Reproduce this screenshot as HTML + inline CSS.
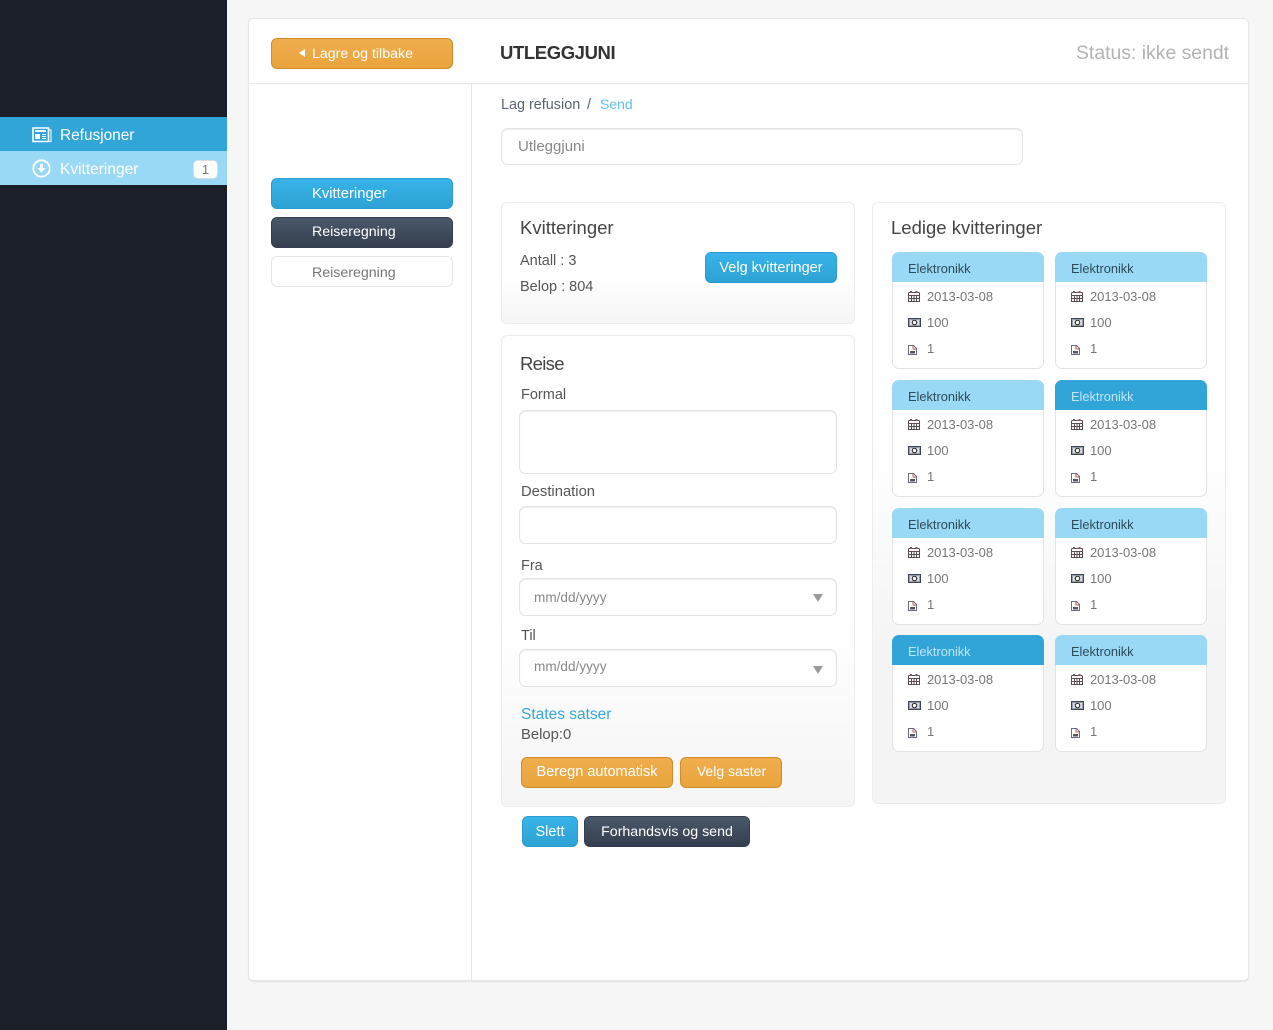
<!DOCTYPE html>
<html lang="no"><head><meta charset="utf-8"><title>Lag refusjon</title>
<style>
html,body{margin:0;padding:0;width:1273px;height:1030px;overflow:hidden;background:#f6f6f6;font-family:"Liberation Sans",sans-serif;color:#555}
*{box-sizing:border-box}
.a{position:absolute}
.t{position:absolute;white-space:nowrap;line-height:20px;height:20px}
.side{left:0;top:0;width:227px;height:1030px;background:#1b1f29}
.panel{left:248px;top:18px;width:1001px;height:963px;background:#fff;border:1px solid #e6e6e6;border-radius:5px;box-shadow:0 1px 1px #e4e4e4}
.box{border:1px solid #ececec;border-radius:6px;background:linear-gradient(#fff 60%,#f5f5f5)}
.btn{position:absolute;border-radius:6px;color:#fff;font-size:14px;text-align:center;white-space:nowrap;height:31px;line-height:30px}
.or{background:linear-gradient(#f0ad4e,#e9a43c);border:1px solid #d08c2c}
.bl{background:linear-gradient(#38b3e9,#2da2d4);border:1px solid #2a9ccf}
.dk{background:linear-gradient(#4a596b,#343e4e);border:1px solid #343e4e}
.wh{background:#fff;border:1px solid #e6e6e6;color:#777}
.inp{position:absolute;background:#fff;border:1px solid #e2e2e2;border-radius:7px;box-shadow:inset 0 1px 1px #eee;font-size:14px;color:#888}
.lab{font-size:14px;color:#555}
.h{font-size:18.5px;color:#444}
.arrow{position:absolute;width:0;height:0;border-left:5px solid transparent;border-right:5px solid transparent;border-top:8px solid #999}
.card{position:absolute;width:152px;height:117px;background:#fff;border:1px solid #e3e3e3;border-radius:7px;font-size:13px;color:#777}
.card .hd{position:absolute;left:-1px;top:-1px;width:152px;height:30px;background:#99d9f5;border-radius:7px 7px 0 0;color:#2d4a5a;font-size:12.8px;line-height:33px;padding-left:16px}
.card .hd.on{background:#32a5d8;color:#bfe6f8}
.card svg{position:absolute;left:15px;width:13px;height:13px}
.card span{position:absolute;left:34px;line-height:20px;white-space:nowrap;letter-spacing:-.05px}
</style></head><body>
<svg width="0" height="0" style="position:absolute"><defs>
<symbol id="cal" viewBox="0 0 13 13"><path d="M.5 3.500q0-1 1-1h9q1 0 1 1v8h-11zM.5 5.500h11M.5 8.500h11M3.500 5.500v6M6 5.500v6M8.500 5.500v6" fill="none" stroke="#5a4a52" stroke-width="1"/><path d="M2 1h2v2H2zM7.500 1h2v2h-2z" fill="#7a5a5a"/></symbol>
<symbol id="mon" viewBox="0 0 13 13"><rect x="0.500" y="2.500" width="12" height="8" fill="#fff" stroke="#3c4650"/><rect x="1.500" y="3.500" width="10" height="6" fill="#dde" stroke="#44505c" stroke-width=".5"/><circle cx="6.500" cy="6.500" r="2.200" fill="#fff" stroke="#333" stroke-width="1.200"/></symbol>
<symbol id="doc" viewBox="0 0 13 13"><path d="M.5 2.500h5l3 3v6h-8z" fill="#fff" stroke="#6a6a88"/><path d="M2 8h5v2.500H2z" fill="#555"/><path d="M5 3v3h3" fill="none" stroke="#b06a5a"/></symbol>
</defs></svg>

<div class="a side"></div>
<div class="a" style="left:0;top:117px;width:227px;height:34px;background:#32a5d8"></div>
<div class="a" style="left:0;top:151px;width:227px;height:34px;background:#99d9f5"></div>
<svg class="a" style="left:32px;top:126px" width="20" height="17" viewBox="0 0 20 17"><path d="M1 2h15.500v13.500H1z" fill="none" stroke="#fff" stroke-width="1.600"/><path d="M17 4h2v11.500h-2" fill="none" stroke="#dff2fb" stroke-width="1.200"/><rect x="3" y="4" width="11" height="2" fill="#fff"/><rect x="3" y="8" width="5" height="5" fill="#fff"/><path d="M10 8.500h4M10 10.500h4M10 12.500h4" stroke="#fff"/></svg>
<div class="t" style="left:60px;top:126px;font-size:15.400px;color:#fff">Refusjoner</div>
<svg class="a" style="left:32px;top:159px" width="19" height="19" viewBox="0 0 19 19"><circle cx="9.500" cy="9.500" r="8.200" fill="none" stroke="#fff" stroke-width="1.800"/><path d="M8 5h3v4h2.500l-4 4.500-4-4.500H8z" fill="#fff"/></svg>
<div class="t" style="left:60px;top:160px;font-size:15.500px;color:#fff">Kvitteringer</div>
<div class="a" style="left:193px;top:160px;width:25px;height:19px;background:#fff;border:1px solid #ddd;border-radius:5px;color:#777;font-size:13px;text-align:center;line-height:18px">1</div>

<div class="a panel"></div>
<div class="a" style="left:249px;top:83px;width:999px;height:1px;background:#e6e6e6"></div>
<div class="a" style="left:471px;top:83px;width:1px;height:897px;background:#e6e6e6"></div>

<div class="btn or" style="left:271px;top:38px;width:182px">
<span style="position:absolute;left:27px;top:10px;width:0;height:0;border-top:4px solid transparent;border-bottom:4px solid transparent;border-right:6px solid #fff"></span>
<span style="position:absolute;left:40px;top:0;font-size:14.200px">Lagre og tilbake</span></div>
<div class="t" style="left:500px;top:43px;font-size:18.500px;letter-spacing:-.4px;font-weight:bold;color:#333">UTLEGGJUNI</div>
<div class="t" style="left:1076px;top:43px;font-size:19.400px;color:#b3b3b3">Status: ikke sendt</div>

<div class="btn bl" style="left:271px;top:178px;width:182px;text-align:left;padding-left:40px;font-size:14.800px">Kvitteringer</div>
<div class="btn dk" style="left:271px;top:217px;width:182px;text-align:left;padding-left:40px;font-size:14.200px;line-height:28px">Reiseregning</div>
<div class="btn wh" style="left:271px;top:256px;width:182px;text-align:left;padding-left:40px;font-size:14.200px;line-height:33px">Reiseregning</div>

<div class="t" style="left:501px;top:95px;font-size:14.400px;color:#5a6470">Lag refusion</div>
<div class="t" style="left:587px;top:95px;font-size:14.500px;color:#5a6470">/</div>
<div class="t" style="left:600px;top:94px;font-size:14px;color:#62c1ec">Send</div>
<div class="inp" style="left:501px;top:128px;width:522px;height:37px;padding-left:16px;line-height:35px;font-size:15px">Utleggjuni</div>

<div class="a box" style="left:501px;top:202px;width:354px;height:122px"></div>
<div class="t h" style="left:520px;top:218px">Kvitteringer</div>
<div class="t lab" style="left:520px;top:251px;font-size:14.500px">Antall : 3</div>
<div class="t lab" style="left:520px;top:277px;font-size:14.500px">Belop : 804</div>
<div class="btn bl" style="left:705px;top:252px;width:132px;font-size:14.500px">Velg kvitteringer</div>

<div class="a box" style="left:501px;top:335px;width:354px;height:472px"></div>
<div class="t h" style="left:520px;top:354px;letter-spacing:-.7px">Reise</div>
<div class="t lab" style="left:521px;top:385px;font-size:14.500px">Formal</div>
<div class="inp" style="left:519px;top:410px;width:318px;height:64px"></div>
<div class="t lab" style="left:521px;top:482px;font-size:14.800px">Destination</div>
<div class="inp" style="left:519px;top:506px;width:318px;height:38px"></div>
<div class="t lab" style="left:521px;top:556px;font-size:14.500px">Fra</div>
<div class="inp" style="left:519px;top:578px;width:318px;height:38px;padding-left:14px;line-height:37px;font-size:13.600px">mm/dd/yyyy</div>
<div class="arrow" style="left:813px;top:594px"></div>
<div class="t lab" style="left:521px;top:626px;font-size:14.500px">Til</div>
<div class="inp" style="left:519px;top:649px;width:318px;height:38px;padding-left:14px;line-height:33px;font-size:13.600px">mm/dd/yyyy</div>
<div class="arrow" style="left:813px;top:666px"></div>
<div class="t" style="left:521px;top:705px;font-size:15.500px;color:#35a6da">States satser</div>
<div class="t lab" style="left:521px;top:725px;font-size:14.800px">Belop:0</div>
<div class="btn or" style="left:521px;top:757px;width:152px;font-size:14.500px;line-height:28px">Beregn automatisk</div>
<div class="btn or" style="left:680px;top:757px;width:102px;font-size:14px;padding-left:1px;line-height:26px">Velg saster</div>
<div class="btn bl" style="left:522px;top:816px;width:56px;font-size:14.500px">Slett</div>
<div class="btn dk" style="left:584px;top:816px;width:166px;font-size:14.200px">Forhandsvis og send</div>

<div class="a box" style="left:872px;top:202px;width:354px;height:602px;background:linear-gradient(#fff 40%,#f4f4f4 75%)"></div>
<div class="t h" style="left:891px;top:218px">Ledige kvitteringer</div>

<div class="card" style="left:892px;top:252px"><div class="hd">Elektronikk</div><svg style="top:37px"><use href="#cal"/></svg><span style="top:34px">2013-03-08</span><svg style="top:63px"><use href="#mon"/></svg><span style="top:60px">100</span><svg style="top:90px"><use href="#doc"/></svg><span style="top:86px">1</span></div>
<div class="card" style="left:1055px;top:252px"><div class="hd">Elektronikk</div><svg style="top:37px"><use href="#cal"/></svg><span style="top:34px">2013-03-08</span><svg style="top:63px"><use href="#mon"/></svg><span style="top:60px">100</span><svg style="top:90px"><use href="#doc"/></svg><span style="top:86px">1</span></div>
<div class="card" style="left:892px;top:380px"><div class="hd">Elektronikk</div><svg style="top:37px"><use href="#cal"/></svg><span style="top:34px">2013-03-08</span><svg style="top:63px"><use href="#mon"/></svg><span style="top:60px">100</span><svg style="top:90px"><use href="#doc"/></svg><span style="top:86px">1</span></div>
<div class="card" style="left:1055px;top:380px"><div class="hd on">Elektronikk</div><svg style="top:37px"><use href="#cal"/></svg><span style="top:34px">2013-03-08</span><svg style="top:63px"><use href="#mon"/></svg><span style="top:60px">100</span><svg style="top:90px"><use href="#doc"/></svg><span style="top:86px">1</span></div>
<div class="card" style="left:892px;top:508px"><div class="hd">Elektronikk</div><svg style="top:37px"><use href="#cal"/></svg><span style="top:34px">2013-03-08</span><svg style="top:63px"><use href="#mon"/></svg><span style="top:60px">100</span><svg style="top:90px"><use href="#doc"/></svg><span style="top:86px">1</span></div>
<div class="card" style="left:1055px;top:508px"><div class="hd">Elektronikk</div><svg style="top:37px"><use href="#cal"/></svg><span style="top:34px">2013-03-08</span><svg style="top:63px"><use href="#mon"/></svg><span style="top:60px">100</span><svg style="top:90px"><use href="#doc"/></svg><span style="top:86px">1</span></div>
<div class="card" style="left:892px;top:635px"><div class="hd on">Elektronikk</div><svg style="top:37px"><use href="#cal"/></svg><span style="top:34px">2013-03-08</span><svg style="top:63px"><use href="#mon"/></svg><span style="top:60px">100</span><svg style="top:90px"><use href="#doc"/></svg><span style="top:86px">1</span></div>
<div class="card" style="left:1055px;top:635px"><div class="hd">Elektronikk</div><svg style="top:37px"><use href="#cal"/></svg><span style="top:34px">2013-03-08</span><svg style="top:63px"><use href="#mon"/></svg><span style="top:60px">100</span><svg style="top:90px"><use href="#doc"/></svg><span style="top:86px">1</span></div>
</body></html>
